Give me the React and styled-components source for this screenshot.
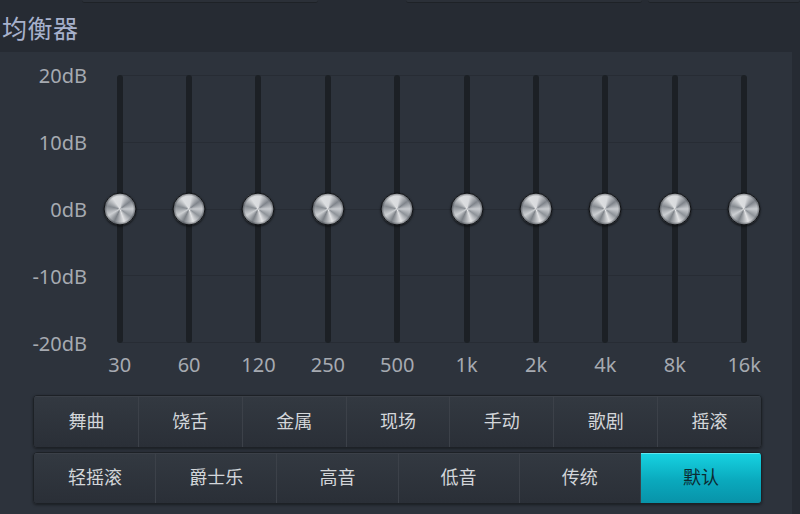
import React from 'react';
import styled, { createGlobalStyle } from 'styled-components';

const GlobalStyle = createGlobalStyle`
  html, body {
    margin: 0;
    padding: 0;
    background: #262b33;
  }
  body {
    width: 800px;
    height: 514px;
    overflow: hidden;
    font-family: "Noto Sans", "Noto Sans CJK SC", sans-serif;
  }
`;

const Page = styled.div`
  width: 800px;
  height: 514px;
  background: #262b33;
  display: flex;
  flex-direction: column;
`;

const TopBar = styled.div`
  display: flex;
  height: 3px;
  padding-left: 82px;
`;

const TopTab = styled.div`
  width: ${p => p.w}px;
  margin-right: ${p => p.gap}px;
  height: 2px;
  background: #2b3038;
  border-bottom: 1px solid #1e2227;
  border-radius: 0 0 4px 4px;
`;

const Header = styled.div`
  height: 49px;
  display: flex;
  align-items: center;
  padding-left: 2px;
  padding-bottom: 2px;
  box-sizing: border-box;
`;

const Title = styled.h1`
  margin: 0;
  font-family: "Noto Sans CJK SC", sans-serif;
  font-weight: 400;
  font-size: 25px;
  color: #a7b1cc;
  letter-spacing: 0.5px;
`;

const Panel = styled.section`
  width: 792px;
  flex: 1;
  background: #2d333c;
  padding-top: 23px;
  box-sizing: border-box;
`;

const SliderArea = styled.div`
  display: flex;
  height: 268px;
`;

const LabelCol = styled.div`
  width: 87px;
  margin-right: -2px;
  display: flex;
  flex-direction: column;
  justify-content: space-between;
`;

const DbLabel = styled.div`
  height: 0;
  display: flex;
  align-items: center;
  justify-content: flex-end;
  font-size: 20px;
  color: #a6aab1;
`;

const Bands = styled.div`
  position: relative;
  display: flex;
`;

const GridLines = styled.div`
  position: absolute;
  left: 34px;
  right: 34px;
  top: 0;
  bottom: 0;
  display: flex;
  flex-direction: column;
  justify-content: space-between;
`;

const GridLine = styled.div`
  height: 1px;
  background: #272c34;
`;

const BandCol = styled.div`
  width: 69.4px;
  display: flex;
  justify-content: center;
`;

const Track = styled.div`
  position: relative;
  width: 6px;
  height: 268px;
  background: #1c2025;
  border-radius: 3px;
`;

const Knob = styled.div`
  position: absolute;
  left: 50%;
  top: ${p => p.pos}%;
  width: 31px;
  height: 31px;
  transform: translate(-50%, -50%);
  border-radius: 50%;
  border: 1px solid #101215;
  background:
    radial-gradient(circle at 50% 50%, rgba(255,255,255,0.5) 0, rgba(255,255,255,0) 2.5px),
    radial-gradient(circle at 50% 50%, rgba(0,0,0,0) 13px, rgba(40,44,50,0.55) 15.5px),
    conic-gradient(from 10deg,
      #d8dadd, #7f848b 12%, #c9ccd0 22%, #8e9399 32%, #e2e3e5 42%,
      #7c8187 54%, #cdd0d3 64%, #868b91 76%, #dcdee0 88%, #d8dadd);
  box-shadow: 0 1px 2px rgba(0, 0, 0, 0.6);
`;

const FreqRow = styled.div`
  display: flex;
  margin-top: 10px;
  padding-left: 85px;
`;

const FreqLabel = styled.div`
  width: 69.4px;
  text-align: center;
  font-size: 20px;
  line-height: 24px;
  color: #a6aab1;
`;

const Presets = styled.div`
  margin-top: 18px;
  margin-left: 33px;
  width: 729px;
  display: flex;
  flex-direction: column;
  gap: 4px;
`;

const PresetRow = styled.div`
  display: flex;
  height: ${p => p.h}px;
  border: 1px solid #1d2126;
  border-radius: 4px;
  overflow: hidden;
  box-shadow: 0 1px 3px rgba(0, 0, 0, 0.45);
`;

const PresetButton = styled.button`
  flex: 1;
  margin: 0;
  padding: 0 0 4px;
  border: none;
  border-left: 1px solid ${p => (p.first ? 'transparent' : '#3c4149')};
  background: ${p =>
    p.active
      ? 'linear-gradient(#17d3e2, #0aa9bd 55%, #0893a9)'
      : 'linear-gradient(#333941, #2a2f37)'};
  box-shadow: inset 0 1px 0 ${p => (p.active ? '#5fe6f0' : '#3b4048')};
  color: ${p => (p.active ? '#0c2b32' : '#d3d6da')};
  font-family: "Noto Sans CJK SC", sans-serif;
  font-size: 18px;
  cursor: pointer;
`;

const dbLabels = ['20dB', '10dB', '0dB', '-10dB', '-20dB'];
const bands = [
  { f: '30', v: 0 },
  { f: '60', v: 0 },
  { f: '120', v: 0 },
  { f: '250', v: 0 },
  { f: '500', v: 0 },
  { f: '1k', v: 0 },
  { f: '2k', v: 0 },
  { f: '4k', v: 0 },
  { f: '8k', v: 0 },
  { f: '16k', v: 0 },
];
const row1 = ['舞曲', '饶舌', '金属', '现场', '手动', '歌剧', '摇滚'];
const row2 = ['轻摇滚', '爵士乐', '高音', '低音', '传统', '默认'];

const App = () => {
  const active = '默认';
  return (
    <>
      <GlobalStyle />
      <Page>
        <TopBar>
          <TopTab w={236} gap={88} />
          <TopTab w={236} gap={6} />
          <TopTab w={152} gap={0} />
        </TopBar>
        <Header>
          <Title>均衡器</Title>
        </Header>
        <Panel>
          <SliderArea>
            <LabelCol>
              {dbLabels.map(l => (
                <DbLabel key={l}>{l}</DbLabel>
              ))}
            </LabelCol>
            <Bands>
              <GridLines>
                {dbLabels.map(l => (
                  <GridLine key={l} />
                ))}
              </GridLines>
              {bands.map(b => (
                <BandCol key={b.f}>
                  <Track>
                    <Knob pos={50 - (b.v / 20) * 50} />
                  </Track>
                </BandCol>
              ))}
            </Bands>
          </SliderArea>
          <FreqRow>
            {bands.map(b => (
              <FreqLabel key={b.f}>{b.f}</FreqLabel>
            ))}
          </FreqRow>
          <Presets>
            <PresetRow h={51}>
              {row1.map((p, i) => (
                <PresetButton key={p} first={i === 0} active={p === active}>{p}</PresetButton>
              ))}
            </PresetRow>
            <PresetRow h={50}>
              {row2.map((p, i) => (
                <PresetButton key={p} first={i === 0} active={p === active}>{p}</PresetButton>
              ))}
            </PresetRow>
          </Presets>
        </Panel>
      </Page>
    </>
  );
};

export default App;
